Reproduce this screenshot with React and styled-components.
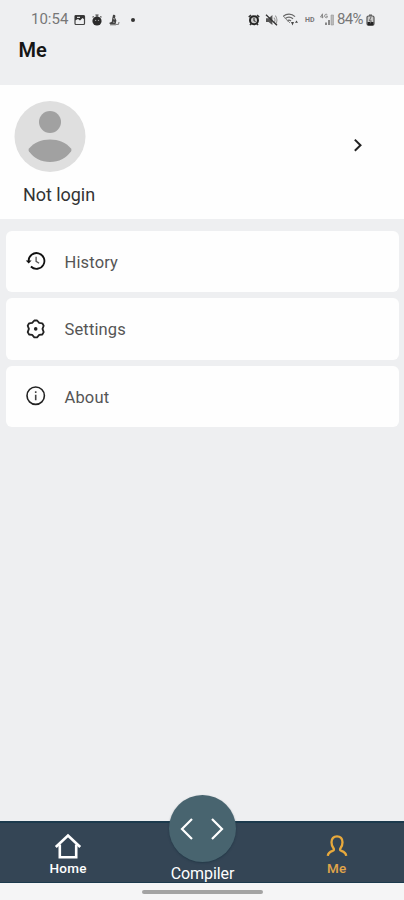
import styled, { createGlobalStyle } from "styled-components";

const GlobalStyle = createGlobalStyle`
    * {
        box-sizing: border-box;
    }

    body {
        margin: 0;
        background-color: #eeeff1;
        font-family: Roboto, "Liberation Sans", sans-serif;
    }
`

function PictureIcon(){
    return(
        <svg width="12" height="12" viewBox="0 0 12 12">
            <rect x="1" y="1.5" width="9.5" height="9" rx="1" fill="none" stroke="#444" strokeWidth="1.2" />
            <path d="M1 1.5h9.5v4L8.5 4 6 6.5 4 5 1 6.5z" fill="#333" />
            <rect x="3" y="2.8" width="3" height="1.2" fill="#ddd" />
        </svg>
    );
}

function TimerIcon(){
    return(
        <svg width="12" height="12" viewBox="0 0 12 12">
            <circle cx="6" cy="7" r="4.6" fill="#2b2b2b" />
            <path d="M4.4 1h3.2M6 1v2M1.6 3.4l1-1M10.4 3.4l-1-1" stroke="#444" strokeWidth="1.2" />
            <path d="M4 6.4h1.2M6.9 6.4h1.2" stroke="#aaa" />
        </svg>
    );
}

function BroomIcon(){
    return(
        <svg width="12" height="12" viewBox="0 0 12 12">
            <path d="M5 1c2-.6 3 .8 2 2.6l1.4 2.8-.9 4.2H2.7L1 9l2.8-1.2.4-3z" fill="#444" />
            <path d="M8 10.4h2.5L11 8M2 10.8h6" stroke="#777" fill="none" />
            <path d="M5 4.6l2 .5M5 8l1.5.4" stroke="#ccc" strokeWidth=".8" />
        </svg>
    );
}

function AlarmIcon(){
    return(
        <svg width="12" height="12" viewBox="0 0 12 12">
            <circle cx="6" cy="6.3" r="4" fill="#ccc" stroke="#222" strokeWidth="2" />
            <path d="M.8 3.2L3 1.2M11.2 3.2L9 1.2M2 11l1.4-1.6M10 11L8.6 9.4" stroke="#333" strokeWidth="1.6" />
            <path d="M6 4v2.6l1.6 1" fill="none" stroke="#333" strokeWidth="1.1" />
        </svg>
    );
}

function MuteIcon(){
    return(
        <svg width="13" height="12" viewBox="0 0 13 12">
            <path d="M1 4.2h2.6L7.4 1v10L3.6 8H1z" fill="#555" />
            <path d="M8.8 3.6c1.4 1.4 1.4 3.6 0 5M10.2 1.6c2.4 2.4 2.4 6.4 0 8.8" fill="none" stroke="#999" strokeWidth="1.1" />
            <path d="M1 .8l11 10.4" stroke="#333" strokeWidth="1.3" />
        </svg>
    );
}

function WifiIcon(){
    return(
        <svg width="17" height="13" viewBox="0 0 17 13">
            <path d="M0 3.6C3.4.3 8.6.3 12 3.6M2 5.8c2.4-2 5.6-2 8 0M4 8c1.2-1 2.8-1 4 0" fill="none" stroke="#666" strokeWidth="1.3" />
            <path d="M1 3.8L7 10" stroke="#888" />
            <path d="M8 9h3L9.5 12.4zM12 9.8h3L13.5 7.4z" fill="#444" />
        </svg>
    );
}

function SignalIcon(){
    return(
        <svg width="15" height="13" viewBox="0 0 15 13">
            <path d="M2.5.8L.5 4h3M2.5.8v4.4M7.3 1.7C5.7.5 4.7 1.6 4.7 3s1.4 2.4 2.6 1.3V3.2H6.1" fill="none" stroke="#888" />
            <path d="M5 9.5h2V12H5zM8 7h2v5H8z" fill="#888" />
            <path d="M11 2h2.5v10H11z" fill="#bbb" stroke="#999" strokeWidth=".6" />
        </svg>
    );
}

function BatteryIcon(){
    return(
        <svg width="9" height="12" viewBox="0 0 9 12">
            <path d="M3 .5h3v1.3H3z" fill="#555" />
            <rect x="1" y="2" width="7" height="9.3" rx="1.5" fill="#ccc" stroke="#555" strokeWidth="1.2" />
            <path d="M1.5 8h6v3h-6z" fill="#222" />
            <path d="M5 3L3.3 6.8h2L4.2 9.5" fill="none" stroke="#666" />
        </svg>
    );
}

function HistoryIcon(){
    return(
        <svg width="22" height="22" viewBox="0 0 22 22" fill="none" stroke="#111">
            <path d="M3.6 11a7.9 7.9 0 1 1 2.3 5.5" strokeWidth="1.8" />
            <path d="M.8 10.4h5.8L3.7 13.5z" fill="#111" stroke="none" />
            <path d="M11.1 6.8v4.6l3 1.9" strokeWidth="1.3" stroke="#555" />
        </svg>
    );
}

function SettingsIcon(){
    return(
        <svg width="22" height="22" viewBox="0 0 22 22">
            <path d="M9.300 2.500h2.800L14.200 4.900 17.300 5.300 18.700 7.700 17.500 10.900 18.700 14.100 17.300 16.500 14.200 16.900 12.100 19.300H9.300L7.200 16.900 4.100 16.500 2.700 14.100 3.900 10.900 2.700 7.700 4.100 5.300 7.200 4.900z" fill="none" stroke="#222" strokeWidth="1.8" strokeLinejoin="round" />
            <circle cx="10.7" cy="10.9" r="1.8" fill="#222" />
        </svg>
    );
}

function AboutIcon(){
    return(
        <svg width="22" height="22" viewBox="0 0 22 22">
            <circle cx="10.7" cy="10.7" r="8.7" fill="none" stroke="#222" strokeWidth="1.6" />
            <path d="M10.7 9.7v5.5M10.7 6.2v1.9" stroke="#444" strokeWidth="1.6" />
        </svg>
    );
}

function Avatar(){
    return(
        <svg width="72" height="72" viewBox="0 0 72 72">
            <circle cx="36" cy="36.5" r="35.5" fill="#dfdfdf" />
            <circle cx="36" cy="22" r="11" fill="#a1a1a1" />
            <path d="M15 48.5C20 42.500 27.500 39.500 36 39.500s16 3 21 9q1 1.500 0 3C52 58 45 62 36 62s-16-4-21-10.500q-1-1.500 0-3z" fill="#a1a1a1" />
        </svg>
    );
}

function HomeIcon(){
    return(
        <svg width="28" height="26" viewBox="0 0 28 26" fill="none" stroke="#fff" strokeWidth="2.6">
            <path d="M1.8 14L14 2.500 26.200 14" />
            <path d="M5.8 11.500v12.700h16.400V11.500" />
        </svg>
    );
}

function PersonIcon(){
    return(
        <svg width="24" height="26" viewBox="0 0 24 26">
            <path d="M2.8 22.800c.2-2.700 2.400-4 4.800-4.900 1.500-.5 1.700-1.500.9-2.600C7.100 13.400 6.500 11.800 6.500 9.200c0-3.600 2.200-5.900 5.500-5.900s5.500 2.300 5.500 5.900c0 2.600-.6 4.200-2 6.100-.8 1.100-.6 2.100.9 2.600 2.400.9 4.600 2.200 4.800 4.900" fill="none" stroke="#e8a93c" strokeWidth="2.3" />
        </svg>
    );
}

function App(){
    return(
        <Page>
            <GlobalStyle />
            <Header>
                <StatusBar>
                    <Time>10:54</Time>
                    <Notices>
                        <PictureIcon />
                        <TimerIcon />
                        <BroomIcon />
                    </Notices>
                    <Dot />
                    <System>
                        <AlarmIcon />
                        <MuteIcon />
                        <WifiIcon />
                        <Network>HD</Network>
                        <SignalIcon />
                    </System>
                    <Percent>84%</Percent>
                    <BatteryIcon />
                </StatusBar>
                <Title>Me</Title>
            </Header>
            <Profile>
                <User>
                    <Avatar />
                    <UserName>Not login</UserName>
                </User>
                <svg width="12" height="16" viewBox="0 0 12 16">
                    <path d="M1.8 2.6L7.500 8.200l-5.700 5.600" fill="none" stroke="#222" strokeWidth="2" />
                </svg>
            </Profile>
            <Menu>
                <MenuItem><HistoryIcon /><MenuLabel>History</MenuLabel></MenuItem>
                <MenuItem><SettingsIcon /><MenuLabel>Settings</MenuLabel></MenuItem>
                <MenuItem><AboutIcon /><MenuLabel>About</MenuLabel></MenuItem>
            </Menu>
            <TabBar>
                <Tab>
                    <HomeIcon />
                    <TabLabel>Home</TabLabel>
                </Tab>
                <CompilerTab>
                    <CompilerButton>
                        <svg width="44" height="22" viewBox="0 0 44 22" fill="none" stroke="#fff" strokeWidth="2.2">
                            <path d="M12 1L2 11l10 10M32 1l10 10-10 10" />
                        </svg>
                    </CompilerButton>
                    <CompilerLabel>Compiler</CompilerLabel>
                </CompilerTab>
                <Tab $active>
                    <PersonIcon />
                    <TabLabel>Me</TabLabel>
                </Tab>
            </TabBar>
            <GestureArea><GestureBar /></GestureArea>
        </Page>
    );
}

export default App;


const Page = styled.div`
    display: flex;
    flex-direction: column;
    width: 404px;
    height: 900px;
    overflow: hidden;
    background-color: #eeeff1;
`

const Header = styled.header`
    flex: none;
    height: 85px;
    padding-top: 10px;
`

const StatusBar = styled.div`
    display: flex;
    align-items: center;
    height: 19px;
    padding: 0 29px 0 31px;
    color: #777;
`

const Time = styled.span`
    width: 43px;
    font-size: 15px;
    line-height: 19px;
`

const Notices = styled.div`
    display: flex;
    gap: 5px;
`

const Dot = styled.span`
    width: 4px;
    height: 4px;
    margin-left: 11px;
    border-radius: 50%;
    background-color: #333;
`

const System = styled.div`
    display: flex;
    align-items: center;
    gap: 5px;
    margin-left: auto;
`

const Network = styled.span`
    width: 10px;
    font-weight: 700;
    font-size: 7px;
    line-height: 10px;
`

const Percent = styled.span`
    margin: 0 3px 0 2px;
    font-size: 15px;
    line-height: 19px;
    letter-spacing: -0.6px;
`

const Title = styled.h1`
    margin: 8px 0 0 18.5px;
    font-weight: 600;
    font-size: 20px;
    line-height: 26px;
    color: #161616;
`

const Profile = styled.section`
    display: flex;
    flex: none;
    justify-content: space-between;
    height: 134px;
    padding: 15px 39px 0 14px;
    background-color: #fefefe;

    > svg {
        margin-top: 37px;
    }
`

const User = styled.div`
    display: flex;
    flex-direction: column;
`

const UserName = styled.span`
    margin: 12px 0 0 9px;
    font-size: 18px;
    line-height: 22px;
    letter-spacing: -0.05px;
    color: #333;
`

const Menu = styled.ul`
    display: flex;
    flex: 1;
    flex-direction: column;
    gap: 6px;
    margin: 0;
    padding: 11.5px 5px 0 6px;
    list-style: none;
`

const MenuItem = styled.li`
    display: flex;
    align-items: center;
    gap: 18px;
    height: 61.5px;
    padding-left: 18.5px;
    border-radius: 6px;
    background-color: #fefefe;
`

const MenuLabel = styled.span`
    padding-top: 2px;
    font-size: 16.5px;
    letter-spacing: 0.15px;
    color: #555;
`

const TabBar = styled.nav`
    display: grid;
    flex: none;
    grid-template-columns: 1fr 1fr 1fr;
    height: 62px;
    padding-left: 1px;
    border-top: 2px solid #1c3a4d;
    border-bottom: 1px solid #1c3a4d;
    background-color: #344555;
`

const Tab = styled.div`
    display: flex;
    align-items: center;
    flex-direction: column;
    justify-content: flex-end;
    padding-bottom: 8px;
    color: ${({ $active }) => $active ? "#e0a54a" : "#fff"};
`

const TabLabel = styled.span`
    margin-top: 1px;
    font-weight: 500;
    font-size: 13.5px;
    line-height: 16px;
    letter-spacing: 0.3px;
`

const CompilerTab = styled.div`
    display: flex;
    align-items: center;
    flex-direction: column;
    margin-top: -28px;
`

const CompilerButton = styled.div`
    display: flex;
    flex: none;
    align-items: center;
    justify-content: center;
    width: 67px;
    height: 67px;
    border-radius: 50%;
    background-color: #48646f;
    box-shadow: 0 1px 2px rgba(20, 45, 60, 0.5);
`

const CompilerLabel = styled.span`
    margin-top: 1px;
    font-size: 16px;
    line-height: 21px;
    letter-spacing: -0.1px;
    color: #fff;
`

const GestureArea = styled.div`
    display: flex;
    flex: none;
    justify-content: center;
    height: 17px;
    padding-top: 7px;
    background-color: #f5f5f6;
`

const GestureBar = styled.div`
    width: 121px;
    height: 4px;
    border-radius: 2px;
    background-color: #a3a3a3;
`
